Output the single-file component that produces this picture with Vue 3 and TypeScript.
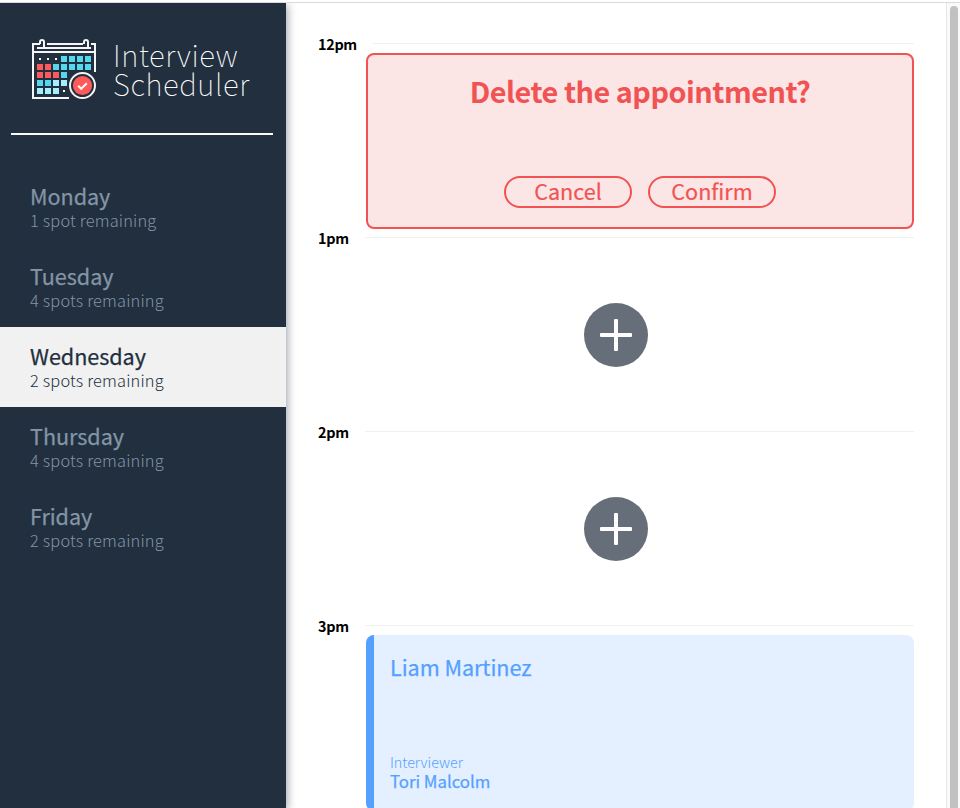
<script setup lang="ts">
interface Day { name: string; spots: string; active?: boolean }
interface Slot { time: string; kind: 'confirm' | 'empty' | 'show' }
interface Cell { x: number; y: number; fill: string }

const days: Day[] = [
  { name: 'Monday', spots: '1 spot remaining' },
  { name: 'Tuesday', spots: '4 spots remaining' },
  { name: 'Wednesday', spots: '2 spots remaining', active: true },
  { name: 'Thursday', spots: '4 spots remaining' },
  { name: 'Friday', spots: '2 spots remaining' },
]

const slots: Slot[] = [
  { time: '12pm', kind: 'confirm' },
  { time: '1pm', kind: 'empty' },
  { time: '2pm', kind: 'empty' },
  { time: '3pm', kind: 'show' },
]

// Calendar grid: b = blue, r = red, l = light blue
const rows = ['...bbbb', 'rrbbbbb', 'rrrb', 'bbll', 'lll']
const fills: Record<string, string> = { b: '#54d8ef', r: '#ff5a5a', l: '#a4effb' }
const cells: Cell[] = rows.flatMap((row, r) =>
  [...row].flatMap((c, i) => (fills[c] ? [{ x: 5 + i * 8, y: 17 + r * 8, fill: fills[c] }] : [])),
)
</script>

<template>
  <main class="app">
    <aside class="sidebar">
      <div class="logo">
        <svg class="logo-icon" width="65" height="61" viewBox="0 0 65 61" aria-hidden="true">
          <g fill="none" stroke="#f6f6f8" stroke-width="2">
            <path d="M8 5H1V59H37M63 33V5H59M15 5H51M5 9H59M1 13H63" />
            <path d="M8 5V3a2 2 0 0 1 4 0V9M52 5V3a2 2 0 0 1 4 0V9" />
          </g>
          <path d="M7 19h2v2h-2zM15 19h2v2h-2zM23 19h2v2h-2zM31 51h2v2h-2z" fill="#fff" />
          <rect v-for="(c, i) in cells" :key="i" :x="c.x" :y="c.y" width="6" height="6" :fill="c.fill" />
          <circle cx="50.5" cy="46.5" r="12.5" fill="#222f3e" stroke="#f6f6f8" stroke-width="2" />
          <circle cx="50.5" cy="46.5" r="9.6" fill="#ff5a5a" />
          <path d="M46.2 46.8l3 3 5.6-5.6" fill="none" stroke="#fff" stroke-width="2" />
        </svg>
        <div class="logo-text"><span>Interview</span><span>Scheduler</span></div>
      </div>
      <hr class="divider" />
      <ul class="days">
        <li v-for="d in days" :key="d.name" class="day" :class="{ active: d.active }">
          <h2>{{ d.name }}</h2>
          <p>{{ d.spots }}</p>
        </li>
      </ul>
    </aside>

    <section class="schedule">
      <article v-for="s in slots" :key="s.time" class="slot">
        <header class="time"><h4>{{ s.time }}</h4><i class="rule"></i></header>
        <div v-if="s.kind === 'confirm'" class="card confirm">
          <h1>Delete the appointment?</h1>
          <div class="actions">
            <button type="button">Cancel</button>
            <button type="button">Confirm</button>
          </div>
        </div>
        <div v-else-if="s.kind === 'empty'" class="card add">
          <svg width="64" height="64" viewBox="0 0 64 64" role="img">
            <circle cx="32" cy="32" r="32" fill="#666e7a" />
            <rect x="16" y="30" width="32" height="4" rx="1" fill="#fff" />
            <rect x="30" y="16" width="4" height="32" rx="1" fill="#fff" />
          </svg>
        </div>
        <div v-else class="card show">
          <h2>Liam Martinez</h2>
          <div class="interviewer">
            <h4>Interviewer</h4>
            <h3>Tori Malcolm</h3>
          </div>
        </div>
      </article>
    </section>
    <div class="scrollbar"><div class="thumb"></div></div>
  </main>
</template>

<style>
body { margin: 0; overflow: hidden; background: #fff; }
</style>

<style scoped>
.app {
  display: flex;
  box-sizing: border-box;
  width: 960px;
  height: 808px;
  padding-top: 3px;
  overflow: hidden;
  background: linear-gradient(#fff 2px, #dadadd 2px 3px, #fff 3px);
  font-family: "Noto Sans CJK JP", "Noto Sans CJK SC", "Open Sans", sans-serif;
}
h1, h2, h3, h4, p, ul { margin: 0; padding: 0; }
.sidebar {
  flex: 0 0 286px;
  background: #222f3e;
  box-shadow: 2px 2px 8px rgba(34, 47, 62, 0.4);
  clip-path: inset(0 -20px -20px 0);
}
.logo { display: flex; height: 130px; box-sizing: border-box; padding: 36px 0 0 32px; }
.logo-icon { display: block; flex: none; }
.logo-text {
  display: flex;
  flex-direction: column;
  padding: 1px 0 0 16px;
  color: #fff;
  font-size: 29.5px;
  font-weight: 100;
  line-height: 29px;
  letter-spacing: 0.6px;
}
.divider { width: 262px; height: 2px; margin: 0 0 0 11px; border: 0; background: #fafafa; }
.days { margin-top: 32px; list-style: none; }
.day {
  height: 80px;
  box-sizing: border-box;
  padding: 17px 0 0 30px;
  color: #8395a7;
  white-space: nowrap;
}
.day h2 { font-size: 21.6px; font-weight: 400; line-height: 24px; letter-spacing: -0.05px; -webkit-text-stroke: 0.25px currentColor; }
.day p { font-size: 16.4px; font-weight: 300; line-height: 24px; letter-spacing: 0.17px; }
.day.active { background: #f1f1f1; color: #222f3e; }
.schedule { flex: 0 0 596px; box-sizing: border-box; margin-left: 32px; padding-top: 32px; }
.slot { height: 194px; }
.time { display: flex; height: 18px; }
.time h4 { font-size: 14.4px; font-weight: 700; line-height: 18px; letter-spacing: -0.3px; }
.rule { flex: 1; height: 1px; margin: 8px 0 0 16px; background: #f1f1f1; }
.card { width: 548px; height: 176px; box-sizing: border-box; margin-left: 48px; border-radius: 8px; }
.confirm {
  display: flex;
  flex-direction: column;
  align-items: center;
  justify-content: space-between;
  padding: 16px 0 19px;
  border: 2px solid #f15354;
  background: #fbe5e5;
  color: #f15354;
}
.confirm h1 { font-size: 28.8px; font-weight: 700; line-height: 40px; letter-spacing: -0.48px; }
.actions { display: flex; gap: 16px; }
.actions button {
  width: 128px;
  height: 32px;
  box-sizing: border-box;
  padding: 0 0 2px;
  border: 2px solid #f15354;
  border-radius: 16px;
  background: transparent;
  color: #f15354;
  font-family: inherit;
  font-size: 21.6px;
  font-weight: 400;
  line-height: 26px;
  -webkit-text-stroke: 0.2px currentColor;
}
.add { display: flex; align-items: center; padding-left: 218px; }
.add svg { display: block; }
.show {
  display: flex;
  flex-direction: column;
  justify-content: space-between;
  padding: 16px 16px 20px;
  border-left: 8px solid #54a0ff;
  background: #e4f0ff;
  color: #54a0ff;
}
.show h2 { font-size: 21.6px; font-weight: 400; line-height: 32px; letter-spacing: -0.05px; -webkit-text-stroke: 0.25px currentColor; }
.show .interviewer h4 { font-size: 14.4px; font-weight: 300; line-height: 18px; letter-spacing: -0.05px; }
.show .interviewer h3 { font-size: 16.8px; font-weight: 400; line-height: 20px; -webkit-text-stroke: 0.25px currentColor; }
.scrollbar { flex: 1; box-sizing: border-box; margin-left: 32px; padding: 3px 2px 0 3px; border-left: 1px solid #e5e5e5; background: #fafafa; }
.thumb { width: 8px; height: 820px; border-radius: 4px; background: #c1c1c1; }
</style>
